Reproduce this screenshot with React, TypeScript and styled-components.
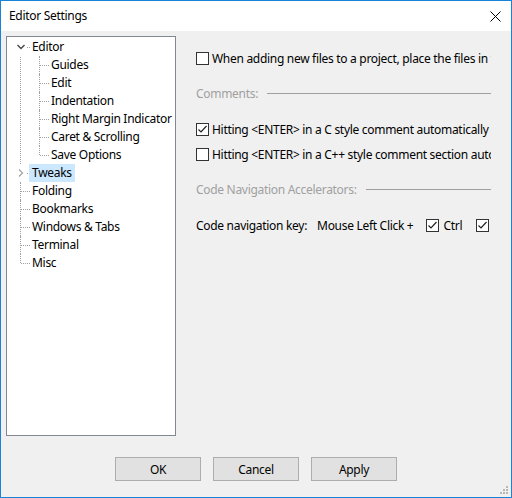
import styled, { createGlobalStyle } from 'styled-components';

const GlobalStyle = createGlobalStyle`
    html, body {
        margin: 0;
        padding: 0;
        background: #f0f0f0;
    }
    body {
        font-family: 'Segoe UI', 'Noto Sans', sans-serif;
        font-size: 12px;
        letter-spacing: -0.3px;
        color: #000;
    }
`;

interface TreeItem {
    label: string,
    children?: string[],
    expanded?: boolean,
    selected?: boolean,
    collapsible?: boolean
}

const tree: TreeItem[] = [
    { label: 'Editor', expanded: true, children: ['Guides', 'Edit', 'Indentation', 'Right Margin Indicator', 'Caret & Scrolling', 'Save Options'] },
    { label: 'Tweaks', selected: true, collapsible: true },
    { label: 'Folding' },
    { label: 'Bookmarks' },
    { label: 'Windows & Tabs' },
    { label: 'Terminal' },
    { label: 'Misc' },
];

function Check({ checked }: { checked?: boolean }) {
    return (
        <Box>
            {checked && (
                <svg width="11" height="11" viewBox="0 0 11 11">
                    <polyline points="1.5,5.5 4,8 9.5,2" fill="none" stroke="#222" strokeWidth="1.2" />
                </svg>
            )}
        </Box>
    );
}

function SectionHeader({ title }: { title: string }) {
    return (
        <Section>
            <SectionLabel>{title}</SectionLabel>
            <SectionLine />
        </Section>
    );
}

export default function App() {
    return (
        <>
            <GlobalStyle />
            <Window>
                <TitleBar>
                    <Title>Editor Settings</Title>
                    <Close>
                        <svg width="11" height="11" viewBox="0 0 11 11">
                            <path d="M0.5 0.5 L10.5 10.5 M10.5 0.5 L0.5 10.5" stroke="#000" strokeWidth="1" />
                        </svg>
                    </Close>
                </TitleBar>

                <Body>
                    <Main>
                        <Tree>
                            <TopList>
                                {tree.map((item, i) => (
                                    <TopNode key={item.label} $last={i === tree.length - 1} $first={i === 0}>
                                        <TopRow>
                                            {item.expanded && <Chevron>
                                                <svg width="8" height="6" viewBox="0 0 8 6">
                                                    <polyline points="0.5,1 4,4.5 7.5,1" fill="none" stroke="#444" strokeWidth="1.3" />
                                                </svg>
                                            </Chevron>}
                                            {item.collapsible && <Chevron>
                                                <svg width="6" height="8" viewBox="0 0 6 8">
                                                    <polyline points="1,0.5 4.5,4 1,7.5" fill="none" stroke="#a6a6a6" strokeWidth="1.3" />
                                                </svg>
                                            </Chevron>}
                                            <Label $selected={item.selected}>{item.label}</Label>
                                        </TopRow>
                                        {item.children && (
                                            <ChildList>
                                                {item.children.map((c, j) => (
                                                    <ChildNode key={c} $last={j === item.children!.length - 1}>
                                                        <Label>{c}</Label>
                                                    </ChildNode>
                                                ))}
                                            </ChildList>
                                        )}
                                    </TopNode>
                                ))}
                            </TopList>
                        </Tree>

                        <Panel>
                            <CheckRow>
                                <Check />
                                <span>When adding new files to a project, place the files in the project folder</span>
                            </CheckRow>

                            <SectionHeader title="Comments:" />

                            <CheckRow $gap={18}>
                                <Check checked />
                                <span>Hitting &lt;ENTER&gt; in a C style comment automatically continues the comment</span>
                            </CheckRow>
                            <CheckRow $gap={7}>
                                <Check />
                                <span>Hitting &lt;ENTER&gt; in a C++ style comment section automatically continues it</span>
                            </CheckRow>

                            <SectionHeader title="Code Navigation Accelerators:" />

                            <KeyRow>
                                <KeyLabel>Code navigation key:</KeyLabel>
                                <KeyLabel>Mouse Left Click +</KeyLabel>
                                <Modifier>
                                    <Check checked />
                                    <span>Ctrl</span>
                                </Modifier>
                                <Modifier>
                                    <Check checked />
                                    <span>Shift</span>
                                </Modifier>
                            </KeyRow>
                        </Panel>
                    </Main>

                    <Footer>
                        <Button>OK</Button>
                        <Button>Cancel</Button>
                        <Button>Apply</Button>
                    </Footer>
                </Body>

                <Grip>
                    <svg width="9" height="9" viewBox="0 0 9 9">
                        {[[6, 0], [3, 3], [6, 3], [0, 6], [3, 6], [6, 6]].map(([x, y]) => (
                            <rect key={`${x}-${y}`} x={x} y={y} width="2" height="2" fill="#b8b8b8" />
                        ))}
                    </svg>
                </Grip>
            </Window>
        </>
    );
}



const Window = styled.div`
    position: relative;
    width: 512px;
    height: 498px;
    box-sizing: border-box;
    border: 1px solid #1883d7;
    background: #f0f0f0;
    display: flex;
    flex-direction: column;
    overflow: hidden;
`;

const TitleBar = styled.div`
    height: 30px;
    background: #fff;
    display: flex;
    align-items: center;
    justify-content: space-between;
    padding: 0 10px 0 8px;
    flex-shrink: 0;
`;

const Title = styled.div`
    font-size: 12px;
    color: #000;
    margin-top: -1px;
`;

const Close = styled.div`
    display: flex;
    width: 11px;
    height: 11px;
`;

const Body = styled.div`
    flex: 1;
    display: flex;
    flex-direction: column;
    padding: 5px 20px 0 5px;
`;

const Main = styled.div`
    display: flex;
    gap: 20px;
    height: 400px;
`;

const Tree = styled.div`
    width: 170px;
    height: 400px;
    box-sizing: border-box;
    border: 1px solid #828790;
    background: #fff;
    padding-top: 1px;
    flex-shrink: 0;
`;

const TopList = styled.ul`
    list-style: none;
    margin: 0;
    padding: 0;
`;

const TopNode = styled.li<{ $last?: boolean, $first?: boolean }>`
    position: relative;

    &::before {
        content: '';
        position: absolute;
        left: 13px;
        top: ${({ $first }) => ($first ? '17px' : '0')};
        height: ${({ $last }) => ($last ? '9px' : 'auto')};
        bottom: ${({ $last }) => ($last ? 'auto' : '0')};
        border-left: 1px dotted #a0a0a0;
    }
`;

const TopRow = styled.div`
    position: relative;
    height: 18px;
    display: flex;
    align-items: center;
    padding-left: 22px;

    &::before {
        content: '';
        position: absolute;
        left: 14px;
        width: 9px;
        top: 9px;
        border-top: 1px dotted #a0a0a0;
    }
`;

const Chevron = styled.span`
    position: absolute;
    left: 8px;
    top: 0;
    width: 12px;
    height: 18px;
    display: flex;
    align-items: center;
    justify-content: center;
    background: #fff;
    z-index: 1;
`;

const Label = styled.span<{ $selected?: boolean }>`
    position: relative;
    z-index: 1;
    line-height: 18px;
    padding: 0 3px;
    white-space: nowrap;
    color: #000;
    background: ${({ $selected }) => ($selected ? '#cce8ff' : 'transparent')};
`;

const ChildList = styled.ul`
    list-style: none;
    margin: 0;
    padding: 0;
`;

const ChildNode = styled.li<{ $last?: boolean }>`
    position: relative;
    height: 18px;
    display: flex;
    align-items: center;
    padding-left: 41px;

    &::before {
        content: '';
        position: absolute;
        left: 32px;
        top: 0;
        height: ${({ $last }) => ($last ? '9px' : '18px')};
        border-left: 1px dotted #a0a0a0;
    }

    &::after {
        content: '';
        position: absolute;
        left: 33px;
        width: 9px;
        top: 9px;
        border-top: 1px dotted #a0a0a0;
    }
`;

const Panel = styled.div`
    flex: 1;
    min-width: 0;
    overflow: hidden;
    display: flex;
    flex-direction: column;
    padding-top: 13px;
`;

const CheckRow = styled.div<{ $gap?: number }>`
    display: flex;
    align-items: center;
    gap: 3px;
    height: 18px;
    margin-top: ${({ $gap }) => $gap ?? 0}px;
    white-space: nowrap;
`;

const Box = styled.span`
    width: 13px;
    height: 13px;
    box-sizing: border-box;
    border: 1px solid #333;
    background: #fff;
    display: inline-flex;
    align-items: center;
    justify-content: center;
    flex-shrink: 0;
`;

const Section = styled.div`
    display: flex;
    align-items: center;
    gap: 9px;
    height: 18px;
    margin-top: 17px;
`;

const SectionLabel = styled.span`
    color: #a0a0a0;
    white-space: nowrap;
`;

const SectionLine = styled.div`
    flex: 1;
    height: 0;
    border-top: 1px solid #a0a0a0;
`;

const KeyRow = styled.div`
    display: flex;
    align-items: center;
    height: 18px;
    margin-top: 18px;
    white-space: nowrap;
`;

const KeyLabel = styled.span`
    margin-right: 10px;
`;

const Modifier = styled.span`
    display: inline-flex;
    align-items: center;
    gap: 4px;
    margin-left: 3px;
    margin-right: 11px;
`;

const Footer = styled.div`
    display: flex;
    gap: 12px;
    padding: 21px 0 0 109px;
`;

const Button = styled.button`
    width: 86px;
    height: 24px;
    box-sizing: border-box;
    border: 1px solid #adadad;
    background: #e1e1e1;
    font-family: 'Segoe UI', 'Noto Sans', sans-serif;
    font-size: 12px;
    letter-spacing: -0.3px;
    color: #000;
    padding: 0;
`;

const Grip = styled.div`
    position: absolute;
    right: 2px;
    bottom: 2px;
    width: 9px;
    height: 9px;
    display: flex;
`;
